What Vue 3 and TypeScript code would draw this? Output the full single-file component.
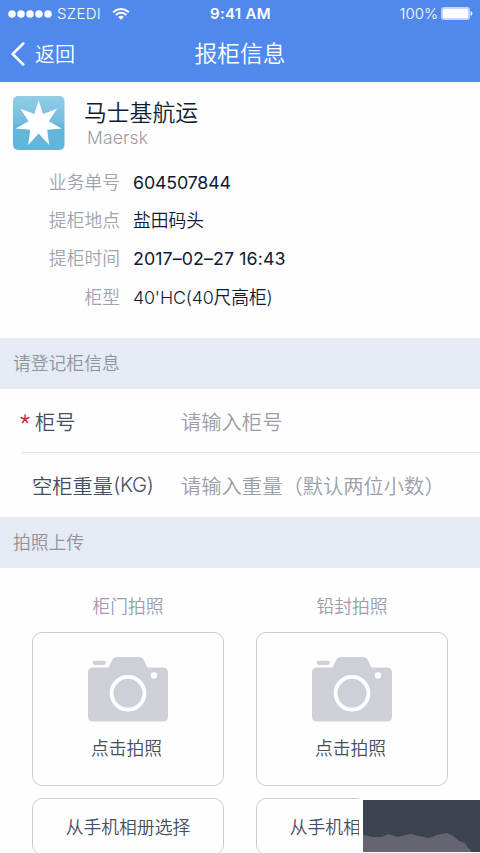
<script setup lang="ts">
interface Detail {
  label: string
  value: string
  numeric?: string
}

const details: Detail[] = [
  { label: '业务单号', value: '604507844', numeric: 'digits' },
  { label: '提柜地点', value: '盐田码头' },
  { label: '提柜时间', value: '2017–02–27 16:43', numeric: 'date' },
  { label: '柜型', value: "40'HC(40尺高柜)", numeric: 'mixed' },
]

const photos: string[] = ['柜门拍照', '铅封拍照']
</script>

<template>
  <main class="screen">
    <header class="header">
      <div class="status">
        <div class="carrier">
          <svg class="signal" width="44" height="8" viewBox="0 0 44 8">
            <circle v-for="n in 5" :key="n" :cx="n * 9 - 5" cy="4" r="3.75" fill="#fff" />
          </svg>
          <span class="carrier-name">SZEDI</span>
          <svg class="wifi" width="18" height="12" viewBox="0 0 18 12" fill="none" stroke="#fff">
            <path d="M1.1 4.3Q9-2.2 16.9 4.3" stroke-width="1.9" />
            <path d="M3.7 7Q9 2.6 14.3 7" stroke-width="1.8" />
            <path d="M6.2 9Q9 6.7 11.8 9L9 11.8Z" fill="#fff" stroke="none" />
          </svg>
        </div>
        <span class="clock">9:41 AM</span>
        <div class="power">
          <span>100%</span>
          <svg width="32" height="13" viewBox="0 0 32 13">
            <rect x=".5" y=".5" width="28" height="12" rx="2" fill="#fff" fill-opacity=".35" stroke="#c2d6fa" />
            <rect x="1.6" y="1.6" width="25.8" height="9.8" rx="1" fill="#fff" />
            <path d="M29.7 4.2Q31.4 4.6 31.4 6.5T29.7 8.8Z" fill="#fff" />
          </svg>
        </div>
      </div>
      <nav class="nav">
        <div class="back">
          <svg width="14" height="24" viewBox="0 0 14 24" fill="none" stroke="#fff" stroke-width="2.5" stroke-linecap="round" stroke-linejoin="round">
            <path d="M12.3 1.5 1.7 12l10.6 10.5" />
          </svg>
          <span>返回</span>
        </div>
        <h1>报柜信息</h1>
      </nav>
    </header>

    <section class="summary">
      <div class="company">
        <svg class="logo" width="52" height="54" viewBox="0 0 52 54">
          <defs>
            <linearGradient id="sky" x1="0" y1="0" x2="0" y2="1">
              <stop offset="0" stop-color="#93cde7" />
              <stop offset=".5" stop-color="#71bcdf" />
              <stop offset=".52" stop-color="#65b5da" />
              <stop offset="1" stop-color="#62b5d9" />
            </linearGradient>
          </defs>
          <rect width="51.5" height="54" rx="5" fill="url(#sky)" />
          <path d="M25.7 4.2 30 18 44 12.8 35.8 25.3 48.8 32.5 34.2 33.8 36.2 49 25.7 37.6 15.2 49 17.2 33.8 2.6 32.5 15.6 25.3 7.4 12.8 21.4 18Z" fill="#fff" />
        </svg>
        <div class="company-text">
          <h2>马士基航运</h2>
          <span>Maersk</span>
        </div>
      </div>
      <dl class="details">
        <div v-for="item in details" :key="item.label" class="detail">
          <dt>{{ item.label }}</dt>
          <dd :class="item.numeric">{{ item.value }}</dd>
        </div>
      </dl>
    </section>

    <h3 class="section-title">请登记柜信息</h3>
    <section class="form">
      <label class="field">
        <span class="field-label"><svg class="required" width="10" height="10" viewBox="0 0 10 10" stroke="#d9202f" stroke-width="1.35"><path d="M5 5V.3M5 5 .5 3.5M5 5l4.5-1.5M5 5 2.2 9M5 5l2.8 4" /></svg>柜号</span>
        <span class="placeholder">请输入柜号</span>
      </label>
      <label class="field weight">
        <span class="field-label">空柜重量<span class="unit">(KG)</span></span>
        <span class="placeholder">请输入重量<span class="hint">（默认两位小数）</span></span>
      </label>
    </section>

    <h3 class="section-title">拍照上传</h3>
    <section class="photos">
      <article v-for="photo in photos" :key="photo" class="photo">
        <h4>{{ photo }}</h4>
        <div class="capture">
          <svg width="80" height="65" viewBox="0 0 80 65">
            <path d="M5 10.5H20.3C23 7.5 23.3 0 29.2 0H50.7C56.7 0 57 7.5 59.6 10.5H75Q80 10.5 80 15.5V59.5Q80 64.5 75 64.5H5Q0 64.5 0 59.5V15.5Q0 10.5 5 10.5Z" fill="#cdd1d7" />
            <rect x="4.7" y="3.7" width="13.2" height="4.2" rx="2.1" fill="#cdd1d7" />
            <circle cx="40" cy="36.2" r="16.4" fill="none" stroke="#fff" stroke-width="3.8" />
            <circle cx="66" cy="18.5" r="3.2" fill="#fff" />
          </svg>
          <span>点击拍照</span>
        </div>
        <div class="album"><span>从手机相册选择</span></div>
      </article>
    </section>

    <div class="overlay">
      <svg width="117" height="52" viewBox="0 0 117 52">
        <rect width="117" height="52" fill="#3c4250" />
        <path d="M0 35 10 37 19 37 25 34 35 37 42 35 48 34 56 36 66 38 74 35 84 33 90 36 96 41 102 43 105 48 108 50 108 52 0 52Z" fill="#656572" />
      </svg>
    </div>
  </main>
</template>

<style>
body {
  background: #fefefe;
  overflow: hidden;
}
</style>

<style scoped>
.screen {
  position: relative;
  width: 480px;
  height: 853px;
  overflow: hidden;
  background: #fefefe;
  color: #101a30;
  font-family: Inter, "Noto Sans CJK SC", sans-serif;
  font-weight: 350;
  font-size: 17.8px;
}
h1, h2, h3, h4, dl, dd { margin: 0; font-weight: 350; }
svg { display: block; flex: none; }
span, h1, h2, h4, dt, dd { white-space: nowrap; }
.header { height: 82px; background: #5089eb; color: #fff; }
.status {
  display: grid;
  grid-template-columns: 1fr auto 1fr;
  align-items: center;
  height: 27px;
  padding: 0 7px 0 8px;
  font-size: 15px;
}
.carrier, .power { display: flex; align-items: center; }
.carrier-name { margin-left: 5px; letter-spacing: .3px; }
.wifi { margin-left: 11px; }
.clock { font-weight: 600; font-size: 15px; letter-spacing: .3px; }
.power { justify-content: flex-end; gap: 3px; }
.nav {
  display: grid;
  grid-template-columns: 1fr auto 1fr;
  align-items: center;
  height: 54px;
  padding: 0 11px;
}
.back { display: flex; align-items: center; gap: 10px; font-size: 20px; line-height: 30px; }
.back span { padding-top: 2px; }
.nav h1 { font-size: 22.8px; line-height: 32px; }
.summary { height: 242px; padding: 14px 13px 0; }
.company { display: flex; gap: 19px; height: 67.5px; }
.company-text { display: flex; flex-direction: column; padding-top: 1px; }
.company h2 { font-size: 22.8px; line-height: 31px; }
.company span { padding-left: 3px; color: #989da8; font-size: 17.5px; line-height: 19px; letter-spacing: .2px; }
.detail { display: grid; grid-template-columns: 107px 1fr; gap: 13px; height: 38.4px; align-items: center; line-height: 26px; }
dt { text-align: right; color: #a0a4ad; }
.digits { font-weight: 400; letter-spacing: -.15px; }
.date { font-weight: 400; letter-spacing: .1px; }
.mixed { letter-spacing: -.15px; }
.section-title { height: 51px; padding-left: 13px; background: #e6eaf2; color: #8d929f; font-size: 17.8px; line-height: 52px; }
.form { height: 128px; color: #454e5f; }
.field {
  display: grid;
  grid-template-columns: 160px 1fr;
  align-items: center;
  height: 63px;
  margin-left: 21px;
  border-bottom: 1px solid #dfe1e4;
  font-size: 20.3px;
}
.weight { border-bottom: 0; height: 63px; }
.field-label { display: flex; align-items: center; }
.required { margin: -3px 5px 0 -1px; }
.weight .field-label { padding-left: 11px; }
.unit { letter-spacing: -.3px; }
.placeholder { color: #9a9fa9; }
.photos { display: grid; grid-template-columns: 192px 192px; gap: 32px; padding: 0 32px; }
.photo { display: flex; flex-direction: column; }
.photo h4 { height: 64px; padding-top: 14px; box-sizing: border-box; text-align: center; color: #999ea8; font-size: 17.8px; line-height: 50px; }
.capture {
  display: flex;
  flex-direction: column;
  align-items: center;
  box-sizing: border-box;
  height: 154px;
  padding-top: 24px;
  border: 1px solid #c8ccd3;
  border-radius: 10px;
  color: #454e5f;
}
.capture span { margin: 12px 3px 0 0; line-height: 29px; }
.album {
  display: flex;
  justify-content: center;
  box-sizing: border-box;
  height: 57px;
  margin-top: 12px;
  border: 1px solid #c8ccd3;
  border-radius: 10px;
  color: #454e5f;
  line-height: 57px;
}
.overlay { position: absolute; left: 359px; top: 797px; width: 121px; height: 56px; padding: 3px 0 0 4px; box-sizing: border-box; background: #fefefe; }
</style>
